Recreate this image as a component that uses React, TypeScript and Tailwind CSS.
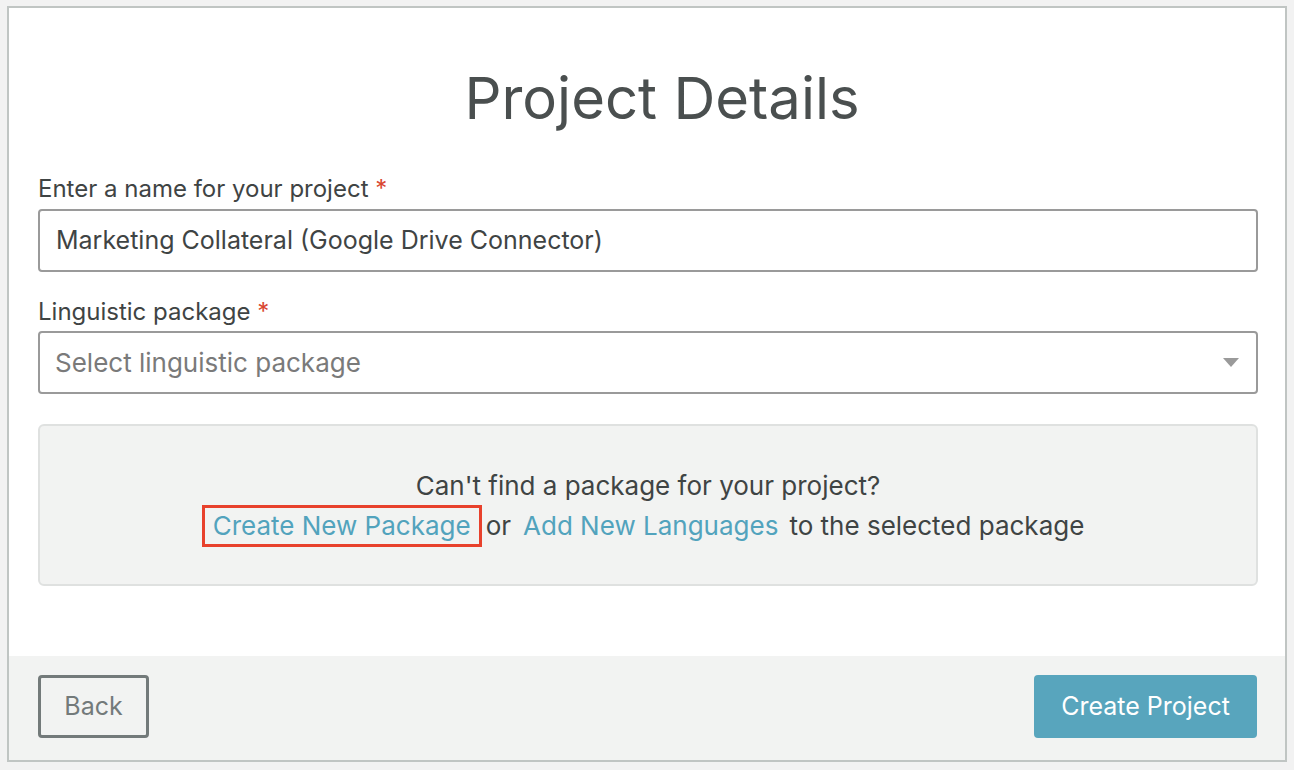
import React from "react"

const font = { fontFamily: "Inter, 'Open Sans', sans-serif" }

function Label({ children }: { children: React.ReactNode }) {
  return (
    <div className="text-[24px] leading-[28px] text-[#3f4444]">
      {children} <span className="text-[#d9462f]">*</span>
    </div>
  )
}

export default function App() {
  return (
    <div className="min-h-[770px] bg-[#f2f2f2] pl-[7px] pt-[6px]" style={font}>
      <div className="flex h-[756px] w-[1280px] flex-col border-2 border-[#c0c5c3] bg-white">
        <div className="flex flex-1 flex-col pl-[29px] pr-[27px]">
          <h1 className="mt-[58px] pl-[28px] text-center text-[58px] leading-[64px] font-normal text-[#4a4f4f]">
            Project Details
          </h1>

          <div className="mt-[45px]">
            <Label>Enter a name for your project</Label>
            <div className="mt-[6px] flex h-[63px] items-center rounded-[4px] border-2 border-[#9a9a9a] px-[16px] text-[25px] text-[#3f4444]">
              Marketing Collateral (Google Drive Connector)
            </div>
          </div>

          <div className="mt-[26px]">
            <Label>Linguistic package</Label>
            <div className="mt-[5px] flex h-[63px] items-center justify-between rounded-[4px] border-2 border-[#9a9a9a] pl-[15px] pr-[17px] text-[26px] text-[#7a7a7a]">
              <span>Select linguistic package</span>
              <svg width="16" height="9" viewBox="0 0 16 9">
                <path d="M0 0h16L8 9z" fill="#9a9a9a" />
              </svg>
            </div>
          </div>

          <div className="mt-[30px] flex h-[162px] flex-col items-center justify-center rounded-[6px] border-2 border-[#dfe1e0] bg-[#f2f3f2] pt-[2px] text-[26px] leading-[39px] text-[#3f4444]">
            <div>Can't find a package for your project?</div>
            <div className="flex items-center pr-[10px]">
              <span className="border-[3px] border-[#e8412c] px-[8px] leading-[36px] text-[#52a3bd]">
                Create New Package
              </span>
              <span className="ml-[4px]">or</span>
              <span className="ml-[12px] text-[#52a3bd]">Add New Languages</span>
              <span className="ml-[11px]">to the selected package</span>
            </div>
          </div>
        </div>

        <div className="flex h-[104px] items-start justify-between bg-[#f2f3f2] pl-[29px] pr-[28px] pt-[19px]">
          <button className="h-[63px] w-[111px] rounded-[4px] border-[3px] border-[#737a7a] text-[25px] text-[#737a7a]">
            Back
          </button>
          <button className="h-[63px] w-[223px] rounded-[4px] bg-[#58a5bd] text-[25px] text-white">
            Create Project
          </button>
        </div>
      </div>
    </div>
  )
}
